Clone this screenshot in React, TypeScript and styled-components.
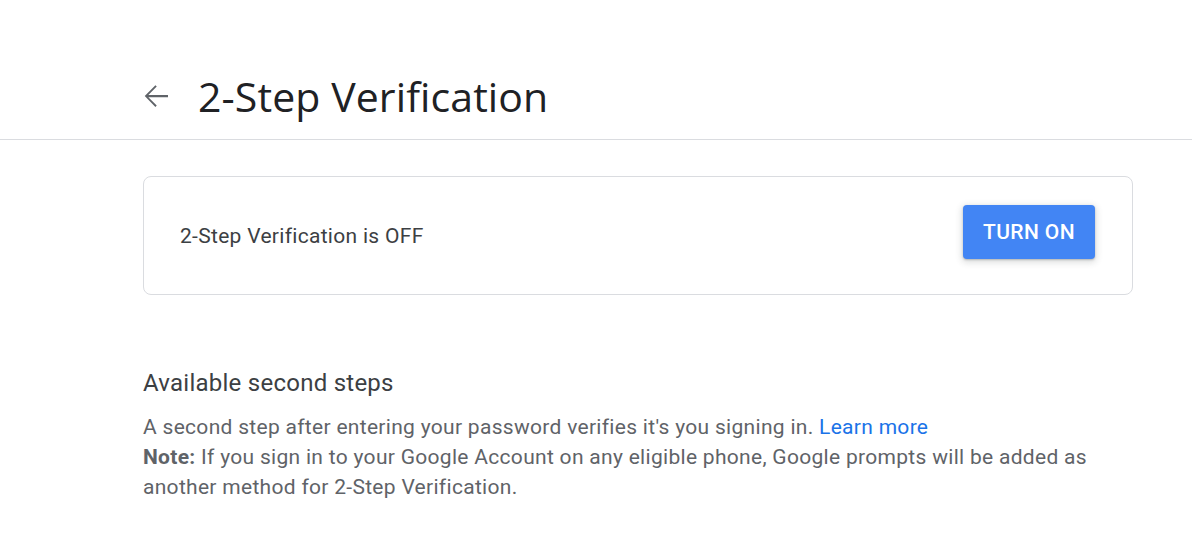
import { FC } from "react"
import styled, { createGlobalStyle } from "styled-components"

const GlobalStyle = createGlobalStyle`
  html, body {
    margin: 0;
    padding: 0;
    background: #fff;
  }
  body {
    font-family: Roboto, "Liberation Sans", Arial, sans-serif;
  }
`

const Page = styled.main`
  width: 100%;
  min-height: 535px;
  background: #fff;
`

const Header = styled.header`
  height: 140px;
  border-bottom: 1px solid #dadce0;
  display: flex;
  align-items: center;
  box-sizing: border-box;
  padding: 53px 0 0 138px;
`

const BackButton = styled.button`
  width: 36px;
  height: 36px;
  padding: 0;
  margin: 0 24px 0 0;
  border: none;
  background: none;
  display: flex;
  align-items: center;
  justify-content: center;
  color: #5f6368;
  cursor: pointer;
`

const Title = styled.h1`
  margin: 0;
  font-family: "Open Sans", Roboto, sans-serif;
  font-weight: 400;
  font-size: 41px;
  line-height: 56px;
  color: #202124;
  letter-spacing: 0.1px;
`

const Content = styled.section`
  padding: 36px 59px 0 143px;
  display: flex;
  flex-direction: column;
`

const StatusCard = styled.div`
  height: 119px;
  box-sizing: border-box;
  border: 1px solid #dadce0;
  border-radius: 8px;
  display: flex;
  align-items: center;
  justify-content: space-between;
  padding: 0 37px 0 36px;
`

const StatusText = styled.span`
  font-size: 21px;
  color: #3c4043;
  letter-spacing: 0.3px;
`

const PrimaryButton = styled.button`
  height: 54px;
  margin-bottom: 8px;
  padding: 0 20px;
  border: none;
  border-radius: 4px;
  background: #4285f4;
  color: #fff;
  font-family: Roboto, sans-serif;
  font-size: 21px;
  font-weight: 500;
  letter-spacing: 0.4px;
  box-shadow: 0 1px 2px rgba(60, 64, 67, 0.3), 0 2px 6px 2px rgba(60, 64, 67, 0.15);
  cursor: pointer;
`

const Section = styled.div`
  margin-top: 73px;
`

const SectionTitle = styled.h2`
  margin: 0 0 14px;
  font-size: 24px;
  font-weight: 400;
  line-height: 30px;
  color: #3c4043;
  letter-spacing: 0.25px;
`

const Paragraph = styled.p`
  margin: 0;
  font-size: 21px;
  line-height: 30px;
  color: #5f6368;
  letter-spacing: 0.3px;

  b {
    font-weight: 700;
  }
`

const Link = styled.a`
  color: #1a73e8;
  text-decoration: none;
`

const ArrowBack: FC = () => (
  <svg width="36" height="36" viewBox="0 0 24 24" fill="currentColor">
    <path d="M20 11.25H6.9l5.6-5.6-0.9-0.9L4.5 12l7.1 7.25 0.9-0.9-5.6-5.6H20v-1.5z" />
  </svg>
)

const App: FC = () => (
  <>
    <GlobalStyle />
    <Page>
      <Header>
        <BackButton aria-label="Back">
          <ArrowBack />
        </BackButton>
        <Title>2-Step Verification</Title>
      </Header>
      <Content>
        <StatusCard>
          <StatusText>2-Step Verification is OFF</StatusText>
          <PrimaryButton>TURN ON</PrimaryButton>
        </StatusCard>
        <Section>
          <SectionTitle>Available second steps</SectionTitle>
          <Paragraph>
            A second step after entering your password verifies it's you signing in.{" "}
            <Link href="#">Learn more</Link>
            <br />
            <b>Note:</b> If you sign in to your Google Account on any eligible phone, Google
            prompts will be added as another method for 2-Step Verification.
          </Paragraph>
        </Section>
      </Content>
    </Page>
  </>
)

export default App
